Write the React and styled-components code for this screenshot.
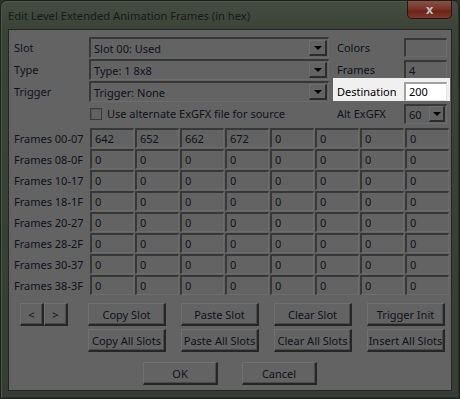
import React from 'react';
import styled, { createGlobalStyle } from 'styled-components';

const face = '#636363';
const ink = '#10121a';

const GlobalStyle = createGlobalStyle`
  html, body {
    margin: 0;
    padding: 0;
    background: #2b3127;
  }
  body {
    font-family: "Noto Sans", "DejaVu Sans", sans-serif;
    font-size: 11px;
    color: ${ink};
  }
`;

const Window = styled.div`
  width: 460px;
  height: 399px;
  box-sizing: border-box;
  display: flex;
  flex-direction: column;
  padding: 0 7px 7px;
  border: 1px solid #1c2119;
  border-radius: 7px 7px 0 0;
  background: linear-gradient(#454c41, #3b4237 30px, #363d33);
  box-shadow: inset 1px 1px 0 #4e5649, inset -1px -1px 0 #2a3027;
`;

const TitleBar = styled.div`
  height: 28px;
  display: flex;
  align-items: flex-start;
  justify-content: space-between;
`;

const Title = styled.span`
  margin-top: 7px;
  font-size: 11.2px;
  color: #171b14;
`;

const CloseButton = styled.div`
  width: 45px;
  height: 18px;
  box-sizing: border-box;
  display: flex;
  align-items: center;
  justify-content: center;
  border: 1px solid #2a1410;
  border-top: none;
  border-radius: 0 0 5px 5px;
  background: linear-gradient(#8a5046, #7a3428 45%, #6c2418 60%, #7a3a2c);
  color: #bdbdbd;
  font-family: "DejaVu Sans", sans-serif;
  font-weight: bold;
  font-size: 12px;
  line-height: 1;
`;

const Client = styled.div`
  flex: 1;
  display: flex;
  flex-direction: column;
  padding: 7px 0 0 5px;
  border: 1px solid #22271f;
  background: ${face};
`;

const TopGrid = styled.div`
  display: grid;
  grid-template-columns: 75px 240px 8px 67px 43px;
  grid-template-rows: repeat(4, 21px);
  row-gap: 1px;
  align-items: center;
`;

const Label = styled.span`
  white-space: nowrap;
  grid-column: ${p => p.$col || 'auto'};
`;

const Sunken = styled.div`
  box-sizing: border-box;
  height: ${p => p.$h || 20}px;
  display: flex;
  align-items: center;
  padding-left: 3px;
  border-style: solid;
  border-width: 2px 1px 1px 2px;
  border-color: #383838 #6c6c6c #6c6c6c #383838;
  background: ${p => (p.$bright ? '#ffffff' : face)};
  white-space: nowrap;
  overflow: hidden;
`;

const Dropdown = styled(Sunken)`
  justify-content: space-between;
  padding-right: 1px;
`;

const ArrowButton = styled.div`
  width: ${p => p.$w || 18}px;
  height: 16px;
  box-sizing: border-box;
  display: flex;
  align-items: center;
  justify-content: center;
  border-style: solid;
  border-width: 1px 2px 2px 1px;
  border-color: #6e6e6e #2c2c2c #2c2c2c #6e6e6e;
  background: ${face};

  &::after {
    content: '';
    border-left: 4px solid transparent;
    border-right: 4px solid transparent;
    border-top: 4px solid #050505;
  }
`;

const CheckRow = styled.label`
  grid-column: 2 / span 1;
  display: flex;
  align-items: center;
  gap: 5px;
  padding-left: 1px;
  white-space: nowrap;
`;

const CheckBox = styled.span`
  width: 12px;
  height: 12px;
  box-sizing: border-box;
  border: 1px solid #3a3a3a;
  box-shadow: inset 1px 1px 0 #555555;
  background: ${face};
`;

const RightCell = styled.div`
  grid-column: 5;
`;

const Highlight = styled.div`
  grid-column: 4 / span 2;
  align-self: stretch;
  display: grid;
  grid-template-columns: 67px 43px;
  align-items: center;
  margin: -3px -3px 1px -4px;
  padding: 3px 3px 0 4px;
  background: #f0f0f0;
  color: #000;
`;

const BrightBox = styled(Sunken)`
  border-color: #a0a0a0 #e3e3e3 #e3e3e3 #a0a0a0;
  height: 19px;
`;

const FrameGrid = styled.div`
  margin-top: 4px;
  display: grid;
  grid-template-columns: 75px repeat(8, 44px);
  grid-auto-rows: 20px;
  column-gap: 1px;
  row-gap: 1px;
  align-items: center;
`;

const Cell = styled(Sunken)`
  padding-left: 3px;
`;

const ButtonGrid = styled.div`
  margin-top: 8px;
  display: grid;
  grid-template-columns: 59px repeat(4, 78px);
  column-gap: 15px;
  grid-auto-rows: 23px;
  row-gap: 3px;
`;

const Button = styled.div`
  box-sizing: border-box;
  width: ${p => p.$w || 78}px;
  height: 23px;
  display: flex;
  align-items: center;
  justify-content: center;
  border-style: solid;
  border-width: 1px 2px 2px 1px;
  border-color: #707070 #262626 #262626 #707070;
  box-shadow: inset -1px -1px 0 #4c4c4c;
  background: ${face};
  white-space: nowrap;
`;

const Nav = styled.div`
  margin-left: 6px;
  display: flex;
`;

const Footer = styled.div`
  margin-top: 10px;
  display: flex;
  justify-content: center;
  gap: 24px;
  padding-right: 5px;
`;

const frameRows = ['00-07', '08-0F', '10-17', '18-1F', '20-27', '28-2F', '30-37', '38-3F'];
const firstRow = ['642', '652', '662', '672', '0', '0', '0', '0'];

export default function App() {
  return (
    <>
      <GlobalStyle />
      <Window>
        <TitleBar>
          <Title>Edit Level Extended Animation Frames (in hex)</Title>
          <CloseButton>x</CloseButton>
        </TitleBar>
        <Client>
          <TopGrid>
            <Label>Slot</Label>
            <Dropdown $h={21}>
              Slot 00: Used
              <ArrowButton />
            </Dropdown>
            <Label $col={4}>Colors</Label>
            <RightCell>
              <Sunken $h={19} />
            </RightCell>

            <Label>Type</Label>
            <Dropdown $h={21}>
              Type: 1 8x8
              <ArrowButton />
            </Dropdown>
            <Label $col={4}>Frames</Label>
            <RightCell>
              <Sunken $h={19}>4</Sunken>
            </RightCell>

            <Label>Trigger</Label>
            <Dropdown $h={21}>
              Trigger: None
              <ArrowButton />
            </Dropdown>
            <Highlight>
              <Label>Destination</Label>
              <BrightBox $bright>200</BrightBox>
            </Highlight>

            <CheckRow>
              <CheckBox />
              Use alternate ExGFX file for source
            </CheckRow>
            <Label $col={4}>Alt ExGFX</Label>
            <RightCell>
              <Dropdown $h={20}>
                60
                <ArrowButton $w={16} />
              </Dropdown>
            </RightCell>
          </TopGrid>

          <FrameGrid>
            {frameRows.map((range, r) => (
              <React.Fragment key={range}>
                <Label>Frames {range}</Label>
                {(r === 0 ? firstRow : Array(8).fill('0')).map((v, i) => (
                  <Cell key={i}>{v}</Cell>
                ))}
              </React.Fragment>
            ))}
          </FrameGrid>

          <ButtonGrid>
            <Nav>
              <Button $w={24}>&lt;</Button>
              <Button $w={24}>&gt;</Button>
            </Nav>
            <Button>Copy Slot</Button>
            <Button>Paste Slot</Button>
            <Button>Clear Slot</Button>
            <Button>Trigger Init</Button>
            <span />
            <Button>Copy All Slots</Button>
            <Button>Paste All Slots</Button>
            <Button>Clear All Slots</Button>
            <Button>Insert All Slots</Button>
          </ButtonGrid>

          <Footer>
            <Button $w={75}>OK</Button>
            <Button $w={75}>Cancel</Button>
          </Footer>
        </Client>
      </Window>
    </>
  );
}
